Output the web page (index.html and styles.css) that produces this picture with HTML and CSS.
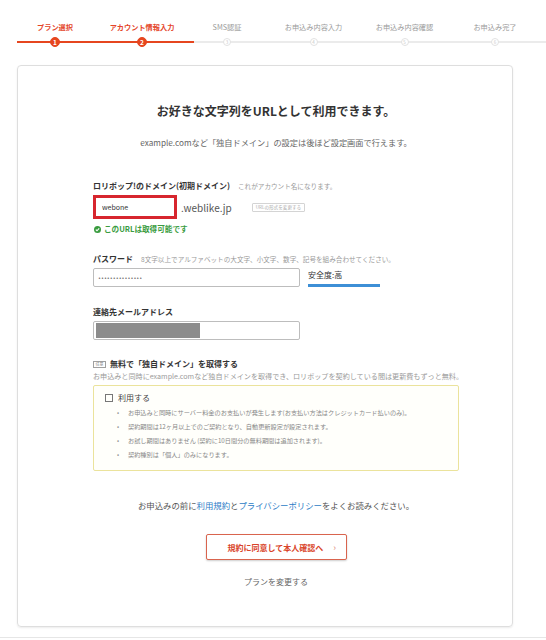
FILE: index.html
```html
<!DOCTYPE html>
<html lang="ja">
<head>
    <meta charset="UTF-8">
    <meta name="viewport" content="width=device-width, initial-scale=1.0">
    <title>アカウント情報入力</title>
    <link rel="stylesheet" href="styles.css">
</head>
<body>
    <!-- Progress steps -->
    <div class="stepper">
        <div class="step-labels">
            <span class="step-label done">プラン選択</span>
            <span class="step-label done">アカウント情報入力</span>
            <span class="step-label">SMS認証</span>
            <span class="step-label">お申込み内容入力</span>
            <span class="step-label">お申込み内容確認</span>
            <span class="step-label">お申込み完了</span>
        </div>
        <div class="step-track">
            <span class="step-num done">1</span>
            <span class="step-num done">2</span>
            <span class="step-num">3</span>
            <span class="step-num">4</span>
            <span class="step-num">5</span>
            <span class="step-num">6</span>
        </div>
    </div>

    <main class="signup-card">
        <h1 class="lead">お好きな文字列をURLとして利用できます。</h1>
        <p class="lead-sub">example.comなど「独自ドメイン」の設定は後ほど設定画面で行えます。</p>

        <!-- Domain -->
        <div class="field first">
            <div class="field-label">ロリポップ!のドメイン(初期ドメイン)<span class="field-hint">これがアカウント名になります。</span></div>
            <div class="domain-row">
                <input class="text-input input-error" type="text" value="webone">
                <span class="domain-suffix">.weblike.jp</span>
                <button class="mini-btn" type="button">URLの形式を変更する</button>
            </div>
            <p class="ok-msg">
                <svg class="ok-icon" viewBox="0 0 10 10" width="7" height="7">
                    <circle cx="5" cy="5" r="5" fill="#3a9c3f"/>
                    <path d="M2.6 5.2 L4.3 6.8 L7.4 3.5" fill="none" stroke="#fff" stroke-width="1.6"/>
                </svg>
                このURLは取得可能です
            </p>
        </div>

        <!-- Password -->
        <div class="field">
            <div class="field-label">パスワード<span class="field-hint">8文字以上でアルファベットの大文字、小文字、数字、記号を組み合わせてください。</span></div>
            <div class="password-row">
                <input class="text-input wide pass-input" type="text" value="•••••••••••••••">
                <div class="strength">
                    <span class="strength-text">安全度:高</span>
                    <span class="strength-bar"></span>
                </div>
            </div>
        </div>

        <!-- Mail -->
        <div class="field">
            <div class="field-label">連絡先メールアドレス</div>
            <div class="text-input wide mail-box"><span class="masked"></span></div>
        </div>

        <!-- Own domain option -->
        <div class="option">
            <div class="option-title"><span class="tag">任意</span>無料で「独自ドメイン」を取得する</div>
            <p class="option-desc">お申込みと同時にexample.comなど独自ドメインを取得でき、ロリポップを契約している間は更新費もずっと無料。</p>
            <div class="option-box">
                <label class="check-line"><span class="checkbox"></span>利用する</label>
                <ul class="notes">
                    <li>お申込みと同時にサーバー料金のお支払いが発生します(お支払い方法はクレジットカード払いのみ)。</li>
                    <li>契約期間は12ヶ月以上でのご契約となり、自動更新設定が設定されます。</li>
                    <li>お試し期間はありません (契約に10日間分の無料期間は追加されます)。</li>
                    <li>契約種別は「個人」のみになります。</li>
                </ul>
            </div>
        </div>

        <p class="terms">お申込みの前に<a href="#">利用規約</a>と<a href="#">プライバシーポリシー</a>をよくお読みください。</p>

        <button class="submit-btn" type="button">規約に同意して本人確認へ<span class="chev">&rsaquo;</span></button>

        <a class="change-plan" href="#">プランを変更する</a>
    </main>

    <footer class="page-foot"></footer>
</body>
</html>
```

FILE: styles.css
```css
body {
    margin: 0;
    font-family: "Noto Sans CJK JP", "Noto Sans", sans-serif;
    color: #333;
    background: #fff;
}

/* Stepper */
.stepper {
    padding: 22px 0 0 11px;
}

.step-labels,
.step-track {
    display: grid;
    grid-template-columns: 88px 86px 84px 89px 93px 88px 1fr;
    justify-items: center;
    align-items: center;
}

.step-label {
    font-size: 7.2px;
    line-height: 10px;
    color: #9a9a9a;
    white-space: nowrap;
}

.step-label.done {
    color: #e4452a;
    font-weight: bold;
}

.step-track {
    margin-top: 5px;
    height: 10px;
    background:
        linear-gradient(#e6461f, #e6461f) 6px 50% / 177px 2px no-repeat,
        linear-gradient(#ebebeb, #ebebeb) 6px 50% / 100% 2px no-repeat;
}

.step-num {
    width: 8px;
    height: 8px;
    box-sizing: border-box;
    border-radius: 50%;
    border: 1px solid #e2e2e2;
    background: #fff;
    color: #c8c8c8;
    font-size: 4.5px;
    display: flex;
    justify-content: center;
    align-items: center;
}

.step-num.done {
    width: 10px;
    height: 10px;
    background: #e6461f;
    border-color: #e6461f;
    color: #fff;
    font-size: 6.5px;
    font-weight: bold;
}

/* Card */
.signup-card {
    margin: 18px 33px 0 17px;
    border: 1px solid #dedede;
    border-radius: 4px;
    box-shadow: 0 1px 2px rgba(0,0,0,0.08);
    padding: 36px 53px 38px 75px;
}

.lead {
    margin: 0;
    font-size: 12px;
    line-height: 18px;
    text-align: center;
    font-weight: bold;
    color: #333;
}

.lead-sub {
    margin: 16px 0 0;
    font-size: 8.2px;
    line-height: 12px;
    text-align: center;
    color: #666;
}

.field {
    margin-top: 19px;
}

.field.first {
    margin-top: 32px;
}

.field-label {
    font-size: 8px;
    line-height: 12px;
    font-weight: bold;
    color: #333;
}

.field-hint {
    margin-left: 8px;
    font-size: 6.6px;
    font-weight: normal;
    color: #9a9a9a;
}

.text-input {
    display: block;
    box-sizing: border-box;
    margin: 0;
    height: 19px;
    border: 1px solid #bdbdbd;
    border-radius: 2px;
    padding: 0 4px;
    font-family: inherit;
    font-size: 6px;
    color: #444;
    background: #fff;
    outline: none;
}

.text-input.wide {
    width: 207px;
}

.domain-row {
    margin-top: 3px;
    display: flex;
    align-items: center;
}

.input-error {
    width: 84px;
    height: 24px;
    border: 3px solid #d7262e;
    border-radius: 0;
    padding: 0 6px;
    font-size: 7px;
    color: #333;
}

.domain-suffix {
    margin-left: 4px;
    font-size: 10px;
    color: #555;
}

.mini-btn {
    margin-left: 20px;
    height: 9px;
    padding: 0 3px;
    border: 1px solid #d4d4d4;
    border-radius: 1px;
    background: #fff;
    font-family: inherit;
    font-size: 4.6px;
    line-height: 7px;
    color: #aaa;
}

.ok-msg {
    margin: 5px 0 0;
    display: flex;
    align-items: center;
    gap: 3px;
    font-size: 7.6px;
    line-height: 10px;
    font-weight: bold;
    color: #3a9c3f;
}

.ok-icon {
    margin-left: 1px;
}

.password-row {
    margin-top: 3px;
    display: flex;
    align-items: flex-start;
}

.pass-input {
    font-family: "DejaVu Sans", sans-serif;
    font-size: 5px;
    letter-spacing: 0;
    color: #555;
}

.strength {
    margin-left: 8px;
    padding-top: 1px;
    display: flex;
    flex-direction: column;
}

.strength-text {
    font-size: 8px;
    line-height: 12px;
    color: #333;
}

.strength-bar {
    margin-top: 3px;
    width: 72px;
    height: 3px;
    background: #3d8fd6;
}

.mail-box {
    margin-top: 3px;
    padding: 1px 2px;
}

.masked {
    display: block;
    width: 104px;
    height: 15px;
    background: #8c8c8c;
}

/* Option */
.option {
    margin-top: 18px;
}

.option-title {
    display: flex;
    align-items: center;
    font-size: 8px;
    line-height: 12px;
    font-weight: bold;
    color: #333;
}

.tag {
    margin-right: 4px;
    width: 13px;
    height: 7px;
    box-sizing: border-box;
    border: 1px solid #a0a0a0;
    font-size: 4px;
    line-height: 5px;
    font-weight: normal;
    color: #888;
    text-align: center;
}

.option-desc {
    margin: 1px 0 0;
    font-size: 7.1px;
    line-height: 10px;
    color: #9a9a9a;
    white-space: nowrap;
}

.option-box {
    margin-top: 4px;
    border: 1px solid #ebe39c;
    border-radius: 2px;
    background: #fffffb;
    padding: 6px 10px 8px 11px;
}

.check-line {
    display: flex;
    align-items: center;
    font-size: 8px;
    line-height: 12px;
    color: #444;
}

.checkbox {
    width: 6px;
    height: 6px;
    border: 1px solid #777;
    margin-right: 5px;
}

.notes {
    margin: 2px 0 0;
    padding: 0;
    list-style: none;
}

.notes li {
    font-size: 6.2px;
    line-height: 14px;
    color: #888;
    padding-left: 12px;
    white-space: nowrap;
}

.notes li::before {
    content: "•";
    display: inline-block;
    width: 11px;
    color: #999;
}

/* Bottom */
.terms {
    margin: 28px 0 0;
    font-size: 8.4px;
    line-height: 12px;
    text-align: center;
    color: #555;
}

.terms a {
    color: #2c7cc6;
    text-decoration: none;
}

.submit-btn {
    margin: 23px auto 0;
    display: flex;
    align-items: center;
    width: 141px;
    height: 26px;
    padding: 0 0 0 21px;
    border: 1px solid #d9644e;
    border-radius: 2px;
    background: #fff;
    box-shadow: 0 1px 2px rgba(0,0,0,0.2);
    font-family: inherit;
    font-size: 8px;
    font-weight: bold;
    color: #d9442a;
}

.chev {
    margin-left: 10px;
    font-weight: normal;
    font-size: 9px;
    color: #e08a78;
}

.change-plan {
    display: block;
    margin-top: 16px;
    font-size: 8px;
    line-height: 12px;
    text-align: center;
    color: #666;
    text-decoration: none;
}

.page-foot {
    margin-top: 10px;
    border-top: 1px solid #e6e6e6;
    height: 10px;
}
```
